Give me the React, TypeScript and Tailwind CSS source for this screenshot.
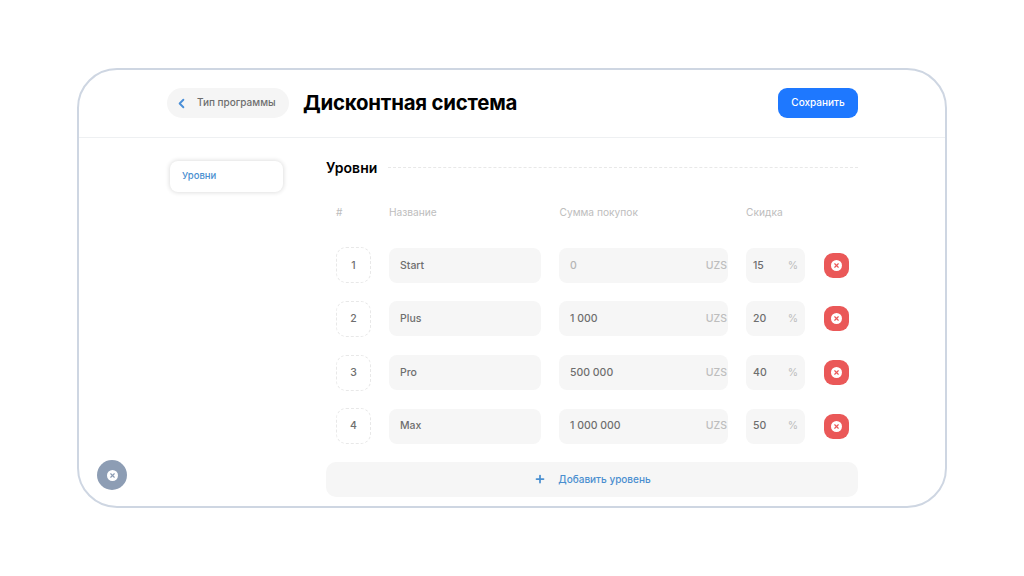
import { ChevronLeft, Plus, X } from 'lucide-react'

const levels = [
  { n: 1, name: 'Start', sum: '0', discount: '15' },
  { n: 2, name: 'Plus', sum: '1 000', discount: '20' },
  { n: 3, name: 'Pro', sum: '500 000', discount: '40' },
  { n: 4, name: 'Max', sum: '1 000 000', discount: '50' },
]

function CircleX({ color }: { color: string }) {
  return (
    <span className="flex h-[11px] w-[11px] items-center justify-center rounded-full bg-white">
      <X className={`h-[7px] w-[7px] ${color}`} strokeWidth={4} />
    </span>
  )
}

export default function App() {
  return (
    <div className="h-[576px] w-[1024px] overflow-hidden bg-white pt-[68px] pl-[77px] font-['Inter',sans-serif]">
      <div className="relative box-border h-[440px] w-[870px] rounded-[40px] border-2 border-[#ced6e2]">
        <header className="flex h-[68px] items-center border-b border-[#eef0f2] pt-[18px] pb-[19px] pl-[88px] pr-[87px]">
          <div className="flex h-[30px] w-[122px] items-center rounded-full bg-[#f5f5f5] pl-[7px]">
            <ChevronLeft className="h-[15px] w-[15px] text-[#4a8fd8]" strokeWidth={3} />
            <span className="mb-[1px] ml-[8px] text-[10px] font-medium text-[#6e6e6e]">Тип программы</span>
          </div>
          <h1 className="ml-[14px] text-[20.4px] leading-[30px] font-bold tracking-[-0.2px] text-black">Дисконтная система</h1>
          <button className="ml-auto h-[30px] w-[80px] rounded-[9px] bg-[#1e78ff] pb-[1px] text-[10px] font-medium text-white">Сохранить</button>
        </header>
        <div className="flex pl-[89px] pr-[87px]">
          <nav className="mt-[23px] w-[117px]">
            <div className="mx-[2px] flex h-[31px] items-center rounded-[8px] bg-white pl-[12px] text-[9.5px] font-medium text-[#4a8fd0] shadow-[0_0_4px_1px_rgba(0,0,0,0.12)]">Уровни</div>
          </nav>
          <main className="ml-[41px] flex-1">
            <div className="mt-[19px] flex h-[20px] items-center">
              <h2 className="text-[14px] font-semibold text-black">Уровни</h2>
              <div className="ml-[11px] flex-1 border-t border-dashed border-[#e8e8e8]" />
            </div>
            <div className="mt-[29px] flex h-[14px] items-center text-[10.2px] text-[#bdbdbd]">
              <span className="ml-[10px] w-[53px]">#</span>
              <span className="w-[170.5px]">Название</span>
              <span className="w-[186.5px]">Сумма покупок</span>
              <span>Скидка</span>
            </div>
            <div className="mt-[27.4px] flex flex-col gap-[17.6px]">
              {levels.map((l) => (
                <div key={l.n} className="flex h-[36px] items-center text-[10.5px] font-medium text-[#6e6e6e]">
                  <div className="ml-[10px] flex h-[36px] w-[35px] items-center justify-center rounded-[10px] border border-dashed border-[#e8e8e8]">{l.n}</div>
                  <div className="ml-[18px] flex h-[35px] w-[152px] items-center rounded-[8px] bg-[#f6f6f6] pl-[11px]">{l.name}</div>
                  <div className="ml-[18px] flex h-[35px] w-[169px] items-center justify-between rounded-[8px] bg-[#f6f6f6] pl-[11px] pr-[1px]">
                    <span className={l.sum === '0' ? 'text-[#b5b5b5]' : ''}>{l.sum}</span>
                    <span className="text-[#bdbdbd]">UZS</span>
                  </div>
                  <div className="ml-[18px] flex h-[35px] w-[59px] items-center justify-between rounded-[8px] bg-[#f6f6f6] pl-[7px] pr-[7px]">
                    <span>{l.discount}</span>
                    <span className="font-normal text-[#bdbdbd]">%</span>
                  </div>
                  <button className="ml-[19px] flex h-[25px] w-[25px] items-center justify-center rounded-[9px] bg-[#ea5858]">
                    <CircleX color="text-[#ea5858]" />
                  </button>
                </div>
              ))}
            </div>
            <button className="mt-[17.6px] flex h-[35px] w-full items-center justify-center rounded-[10px] bg-[#f6f6f6] pl-[1px] text-[10px] font-medium text-[#4a8fd0]">
              <Plus className="mr-[12px] h-[12px] w-[12px]" strokeWidth={3.5} />
              Добавить уровень
            </button>
          </main>
        </div>
        <button className="absolute left-[18px] bottom-[16px] flex h-[30px] w-[30px] items-center justify-center rounded-full bg-[#8d9db4]">
          <CircleX color="text-[#8d9db4]" />
        </button>
      </div>
    </div>
  )
}
